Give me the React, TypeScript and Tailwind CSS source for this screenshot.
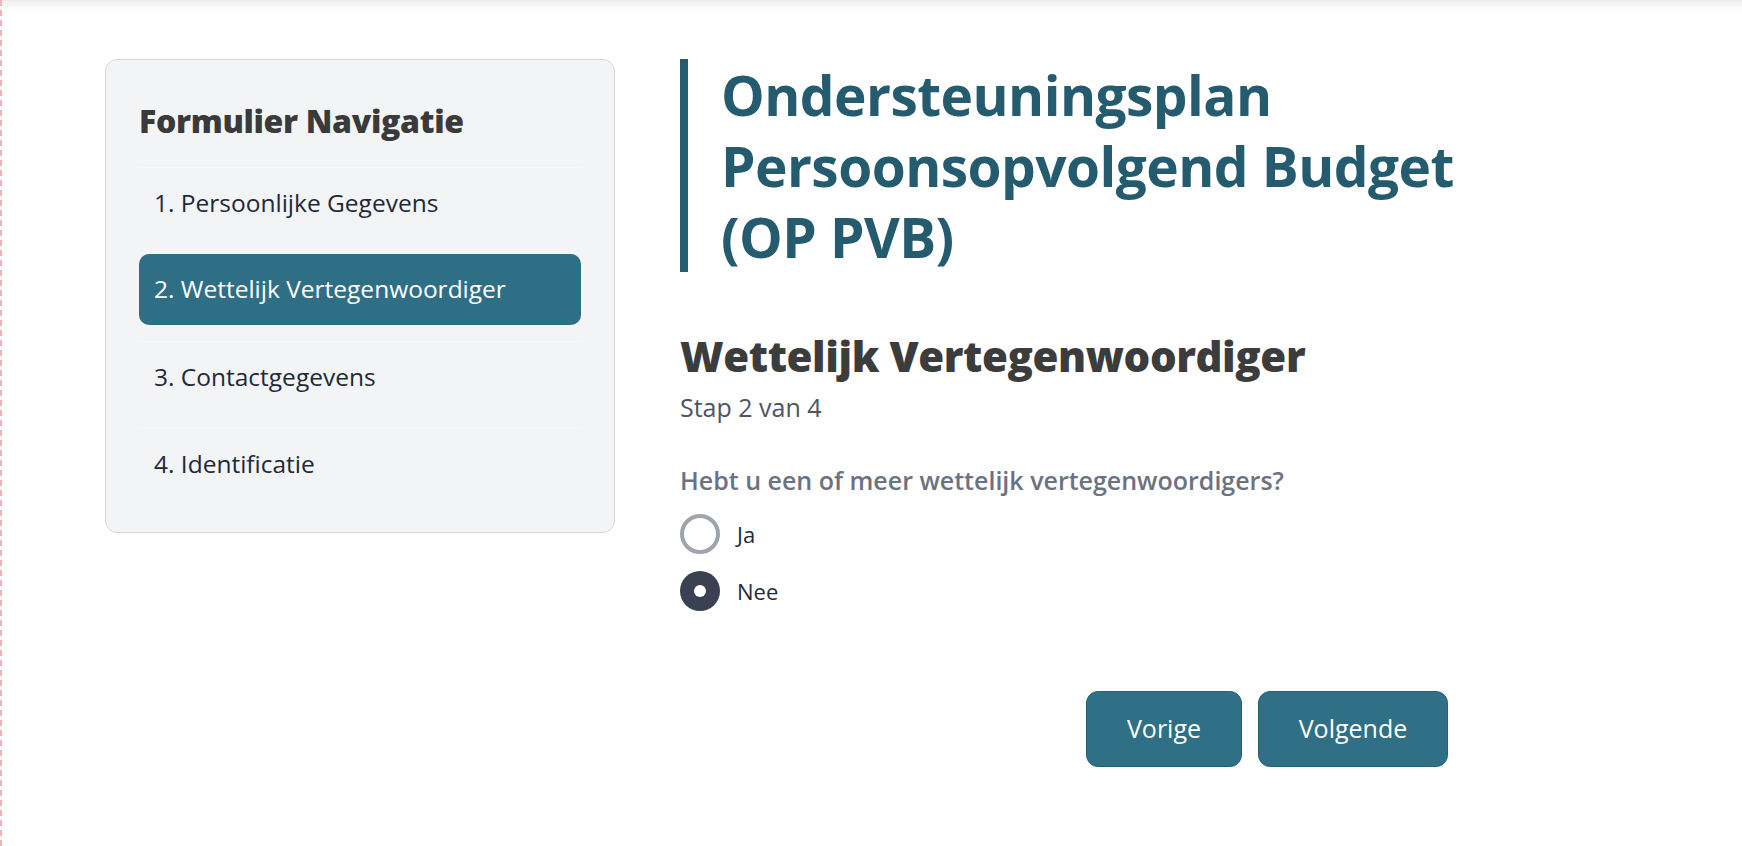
import { useState } from "react";

const STEPS = [
  "1. Persoonlijke Gegevens",
  "2. Wettelijk Vertegenwoordiger",
  "3. Contactgegevens",
  "4. Identificatie",
];

const FONT = { fontFamily: '"Open Sans", "Noto Sans", sans-serif' };

function Radio({ label, checked, onClick }: { label: string; checked: boolean; onClick: () => void }) {
  return (
    <label className="flex items-center gap-[17px] cursor-pointer" onClick={onClick}>
      {checked ? (
        <span className="flex h-[40px] w-[40px] items-center justify-center rounded-full bg-[#3a4150]">
          <span className="h-[12px] w-[12px] rounded-full bg-white" />
        </span>
      ) : (
        <span className="h-[40px] w-[40px] rounded-full border-[4px] border-[#a0a4ad] bg-white" />
      )}
      <span className="text-[22px] leading-[30px] text-[#1f2937]">{label}</span>
    </label>
  );
}

export default function App() {
  const [active] = useState(1);
  const [answer, setAnswer] = useState<"ja" | "nee">("nee");

  return (
    <div className="min-h-screen bg-white border-l-2 border-dashed border-[#f0b4b4]" style={FONT}>
      <div className="h-[10px] bg-gradient-to-b from-[#ececec] to-white" />

      <div className="flex gap-[65px] pl-[103px] pt-[49px]">
        {/* Navigatie */}
        <aside className="w-[510px] shrink-0 self-start rounded-[12px] border border-[#d5d8dd] bg-[#f3f4f6] px-[33px] pt-[33px] pb-[33px]">
          <h2 className="text-[32px] font-extrabold leading-[56px] text-[#3a3a3a] tracking-[-0.01em]">
            Formulier Navigatie
          </h2>
          <ul className="mt-[18px] flex flex-col gap-[16px]">
            {STEPS.map((step, i) => (
              <li
                key={step}
                className={
                  i === active
                    ? "flex h-[71px] items-center rounded-[10px] bg-[#2f6f85] px-[15px] text-[24.5px] text-white"
                    : "flex h-[71px] items-center border-t border-[#f7f8f9] px-[15px] text-[24.5px] text-[#1f2937]"
                }
              >
                {step}
              </li>
            ))}
          </ul>
        </aside>

        {/* Inhoud */}
        <main className="flex w-[768px] flex-col">
          <div className="w-[800px] border-l-8 border-[#265c70] pl-[33px]">
            <h1 className="text-[55px] font-bold leading-[71px] text-[#245b6e] tracking-[-0.01em]">
              Ondersteuningsplan Persoonsopvolgend Budget (OP PVB)
            </h1>
          </div>

          <h2 className="mt-[62px] text-[42px] font-extrabold leading-[44px] text-[#3c3c3c] tracking-[-0.01em]">
            Wettelijk Vertegenwoordiger
          </h2>
          <p className="mt-[14px] text-[25px] leading-[30px] text-[#4b5563]">Stap 2 van 4</p>

          <p className="mt-[43px] text-[25px] font-semibold leading-[30px] text-[#6b7280]">
            Hebt u een of meer wettelijk vertegenwoordigers?
          </p>
          <div className="mt-[19px] flex flex-col gap-[17px]">
            <Radio label="Ja" checked={answer === "ja"} onClick={() => setAnswer("ja")} />
            <Radio label="Nee" checked={answer === "nee"} onClick={() => setAnswer("nee")} />
          </div>

          <div className="mt-[80px] flex justify-end gap-[16px]">
            <button className="h-[76px] w-[156px] rounded-[12px] border border-[#28627a] bg-[#2f7086] text-[25px] text-white">
              Vorige
            </button>
            <button className="h-[76px] w-[190px] rounded-[12px] border border-[#28627a] bg-[#2f7086] text-[25px] text-white">
              Volgende
            </button>
          </div>
        </main>
      </div>
    </div>
  );
}
